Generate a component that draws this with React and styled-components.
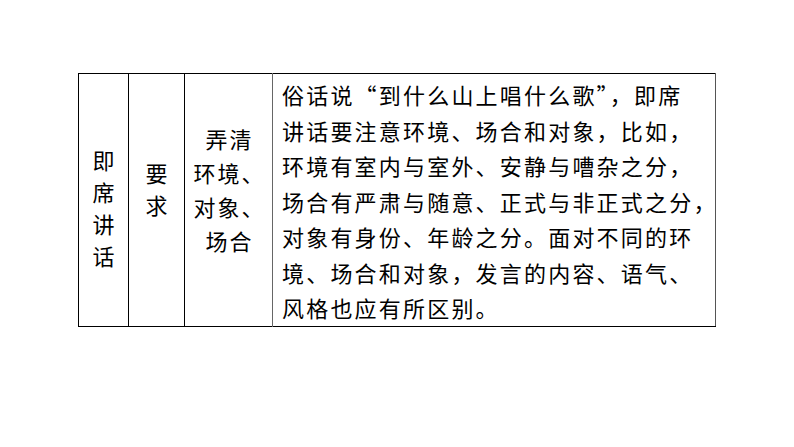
import React from "react";
import styled, { createGlobalStyle } from "styled-components";

const Global = createGlobalStyle`
  body {
    margin: 0;
    background: #fff;
    font-family: "Noto Sans CJK SC", "Noto Sans", sans-serif;
    color: #000;
  }
`;

const Table = styled.table`
  margin: 73px 0 0 78px;
  width: 638px;
  height: 253px;
  border-collapse: collapse;
  table-layout: fixed;
  border-top: 1px solid #000;
  border-left: 1px solid #000;
  border-bottom: 1.5px solid #000;
  border-right: 1.5px solid #555;
`;

const Cell = styled.td`
  border-left: 1px solid #000;
  padding: ${props => props.pad || "0"};
  vertical-align: middle;
  text-align: center;
  font-size: 22px;
  line-height: ${props => props.lh || "32px"};
  letter-spacing: ${props => props.ls || "0"};
  text-indent: ${props => props.ls || "0"};
`;

const Line = styled.div`
  white-space: nowrap;
`;

const TextCell = styled.td`
  border-left: 1px solid #666;
  padding: 3px 0 0 9px;
  vertical-align: top;
  font-size: 22px;
  line-height: 35.5px;
  letter-spacing: 2.2px;
`;

const body = [
  "俗话说“到什么山上唱什么歌”，即席",
  "讲话要注意环境、场合和对象，比如，",
  "环境有室内与室外、安静与嘈杂之分，",
  "场合有严肃与随意、正式与非正式之分，",
  "对象有身份、年龄之分。面对不同的环",
  "境、场合和对象，发言的内容、语气、",
  "风格也应有所区别。",
];

export default function App() {
  return (
    <>
      <Global />
      <Table>
        <colgroup>
          <col style={{ width: 50 }} />
          <col style={{ width: 56 }} />
          <col style={{ width: 88 }} />
          <col />
        </colgroup>
        <tbody>
          <tr>
            <Cell pad="15px 0 0 0">
              {"即席讲话".split("").map(c => <Line key={c}>{c}</Line>)}
            </Cell>
            <Cell pad="0 0 23px 0">
              {"要求".split("").map(c => <Line key={c}>{c}</Line>)}
            </Cell>
            <Cell pad="0 0 21px 0" lh="34px" ls="2px">
              <Line>弄清</Line>
              <Line>环境、</Line>
              <Line>对象、</Line>
              <Line>场合</Line>
            </Cell>
            <TextCell>
              {body.map(l => <Line key={l}>{l}</Line>)}
            </TextCell>
          </tr>
        </tbody>
      </Table>
    </>
  );
}
